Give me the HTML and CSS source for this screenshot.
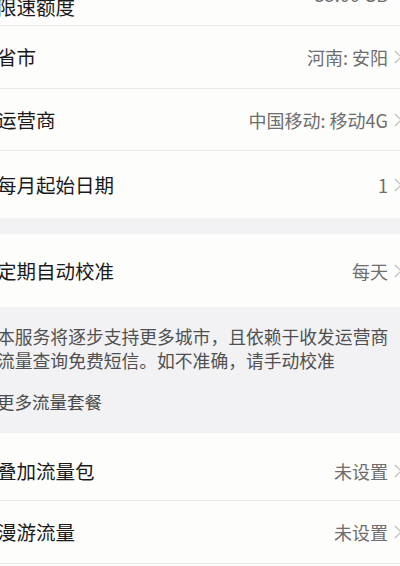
FILE: index.html
```html
<!DOCTYPE html>
<html lang="zh-CN">
<head>
    <meta charset="UTF-8">
    <meta name="viewport" content="width=device-width, initial-scale=1.0">
    <title>流量管理</title>
    <link rel="stylesheet" href="styles.css">
</head>
<body>
    <div class="page">
        <div class="group">
            <div class="row row-first">
                <span class="label">限速额度</span>
                <span class="value value-high">35.00 GB</span>
                <svg class="chevron chevron-high" viewBox="0 0 8 14"><polyline points="1,1 7,7 1,13"/></svg>
            </div>
            <div class="row row-city">
                <span class="label">省市</span>
                <span class="value">河南: 安阳</span>
                <svg class="chevron" viewBox="0 0 8 14"><polyline points="1,1 7,7 1,13"/></svg>
            </div>
            <div class="row row-carrier">
                <span class="label">运营商</span>
                <span class="value">中国移动: 移动4G</span>
                <svg class="chevron" viewBox="0 0 8 14"><polyline points="1,1 7,7 1,13"/></svg>
            </div>
            <div class="row row-start no-line">
                <span class="label">每月起始日期</span>
                <span class="value">1</span>
                <svg class="chevron" viewBox="0 0 8 14"><polyline points="1,1 7,7 1,13"/></svg>
            </div>
        </div>

        <div class="gap"></div>

        <div class="group">
            <div class="row row-auto no-line">
                <span class="label">定期自动校准</span>
                <span class="value">每天</span>
                <svg class="chevron" viewBox="0 0 8 14"><polyline points="1,1 7,7 1,13"/></svg>
            </div>
        </div>

        <div class="note">
            <p class="note-text">本服务将逐步支持更多城市，且依赖于收发运营商流量查询免费短信。如不准确，请手动校准</p>
            <a class="note-link">更多流量套餐</a>
        </div>

        <div class="group">
            <div class="row row-extra">
                <span class="label">叠加流量包</span>
                <span class="value">未设置</span>
                <svg class="chevron" viewBox="0 0 8 14"><polyline points="1,1 7,7 1,13"/></svg>
            </div>
            <div class="row row-roam">
                <span class="label">漫游流量</span>
                <span class="value">未设置</span>
                <svg class="chevron" viewBox="0 0 8 14"><polyline points="1,1 7,7 1,13"/></svg>
            </div>
        </div>
    </div>
</body>
</html>
```

FILE: styles.css
```css
body {
    margin: 0;
    padding: 0;
    background-color: #fdfdfc;
    font-family: "Noto Sans CJK SC", "Noto Sans", sans-serif;
    overflow: hidden;
}

.page {
    width: 406px;
    margin-left: -3px;
}

.group {
    background-color: #fdfdfc;
}

/* one settings line: label left, value + arrow right */
.row {
    display: flex;
    align-items: center;
    box-sizing: border-box;
    padding-right: 1px;
    border-bottom: 1px solid #ebebeb;
}

.row.no-line {
    border-bottom: none;
}

.row-first {
    height: 38px;
    margin-top: -12px;
}

.row-city {
    height: 63px;
}

.row-carrier {
    height: 62px;
}

.row-start {
    height: 67px;
}

.row-auto {
    height: 73px;
}

.row-extra {
    height: 68px;
    padding-top: 8px;
}

.row-roam {
    height: 63px;
}

.label {
    flex: 1;
    font-size: 19.5px;
    color: #1a1a1a;
    line-height: 1;
}

.value {
    font-size: 18px;
    color: #6e6e6e;
    margin-right: 6px;
    line-height: 1;
}

.value-high,
.chevron-high {
    margin-bottom: 26px;
}

.chevron {
    width: 8px;
    height: 14px;
    fill: none;
    stroke: #bdbdbd;
    stroke-width: 1.2;
}

.gap {
    height: 16px;
    background-color: #f2f2f4;
}

.note {
    box-sizing: border-box;
    height: 126px;
    padding: 17px 4px 0 0;
    background-color: #f2f2f4;
}

.note-text {
    margin: 0;
    font-size: 17.8px;
    line-height: 24px;
    color: #505050;
}

.note-link {
    display: block;
    margin-top: 18px;
    font-size: 17.5px;
    line-height: 24px;
    color: #4a4a4a;
}
```
